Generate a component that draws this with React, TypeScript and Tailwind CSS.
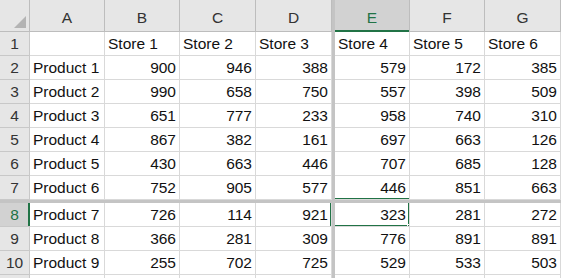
import { Fragment } from 'react'

const cols = ['A', 'B', 'C', 'D', 'E', 'F', 'G']

const rows: (string | number)[][] = [
  ['', 'Store 1', 'Store 2', 'Store 3', 'Store 4', 'Store 5', 'Store 6'],
  ['Product 1', 900, 946, 388, 579, 172, 385],
  ['Product 2', 990, 658, 750, 557, 398, 509],
  ['Product 3', 651, 777, 233, 958, 740, 310],
  ['Product 4', 867, 382, 161, 697, 663, 126],
  ['Product 5', 430, 663, 446, 707, 685, 128],
  ['Product 6', 752, 905, 577, 446, 851, 663],
  ['Product 7', 726, 114, 921, 323, 281, 272],
  ['Product 8', 366, 281, 309, 776, 891, 891],
  ['Product 9', 255, 702, 725, 529, 533, 503],
  ['', '', '', '', '', '', ''],
]

const green = 'bg-[#217346]'

function Cell({ v, r, c }: { v: string | number; r: number; c: number }) {
  const num = typeof v === 'number'
  return (
    <div
      className={`relative flex items-center overflow-hidden whitespace-nowrap border-r border-b border-[#d9d9d9] bg-white px-[3px] text-[15.5px] text-[#111] ${
        num ? 'justify-end' : 'justify-start'
      }`}
    >
      {v}
      {r === 7 && c === 4 && <div className={`absolute right-0 bottom-[-1px] left-0 h-[2px] ${green}`} />}
      {r === 8 && c === 3 && <div className={`absolute top-0 right-[-1px] bottom-0 w-[2px] ${green}`} />}
      {r === 8 && c === 4 && (
        <>
          <div className={`absolute top-0 right-[-1px] bottom-0 w-[2px] ${green}`} />
          <div className={`absolute right-0 bottom-[-1px] left-0 h-[2px] ${green}`} />
          <div className={`absolute right-[-4px] bottom-[-4px] h-[6px] w-[6px] border border-white ${green}`} />
        </>
      )}
    </div>
  )
}

function RowHead({ n }: { n: number }) {
  const sel = n === 8
  return (
    <div
      className={`relative flex items-center justify-center border-r border-b border-[#c8c8c8] text-[15.5px] ${
        sel ? 'bg-[#d2d2d2] text-[#217346]' : 'bg-[#e6e6e6] text-[#333]'
      }`}
    >
      {n <= 10 ? n : ''}
      {sel && <div className={`absolute top-0 right-[-1px] bottom-0 w-[2px] ${green}`} />}
    </div>
  )
}

function Sep() {
  return <div className="bg-[#c4c4c4]" />
}

export default function App() {
  return (
    <div
      className="h-[278px] w-[561px] overflow-hidden bg-white"
      style={{ fontFamily: '"Liberation Sans", Arial, sans-serif' }}
    >
      <div className="grid grid-cols-[30px_75px_75px_76px_76px_3px_75px_75px_76px] grid-rows-[32px_repeat(7,24px)_3px_repeat(4,24px)]">
        <div className="relative border-r border-b border-[#bdbdbd] bg-[#e6e6e6]">
          <svg className="absolute right-[3px] bottom-[3px]" width="12" height="12" viewBox="0 0 12 12">
            <polygon points="12,0 12,12 0,12" fill="#b4b4b4" />
          </svg>
        </div>
        {cols.map((c, i) => (
          <Fragment key={c}>
            {i === 4 && <Sep />}
            <div
              className={`relative flex items-center justify-center border-r border-b border-[#bdbdbd] pt-1 text-[15.5px] ${
                c === 'E' ? 'bg-[#d2d2d2] text-[#217346]' : 'bg-[#e6e6e6] text-[#333]'
              }`}
            >
              {c}
              {c === 'E' && <div className={`absolute right-0 bottom-[-1px] left-0 h-[2px] ${green}`} />}
            </div>
          </Fragment>
        ))}
        {rows.map((row, ri) => {
          const r = ri + 1
          return (
            <Fragment key={r}>
              {r === 8 && <div className="col-span-9 bg-[#c4c4c4]" />}
              <RowHead n={r} />
              {row.map((v, ci) => (
                <Fragment key={ci}>
                  {ci === 4 && <Sep />}
                  <Cell v={v} r={r} c={ci} />
                </Fragment>
              ))}
            </Fragment>
          )
        })}
      </div>
    </div>
  )
}
